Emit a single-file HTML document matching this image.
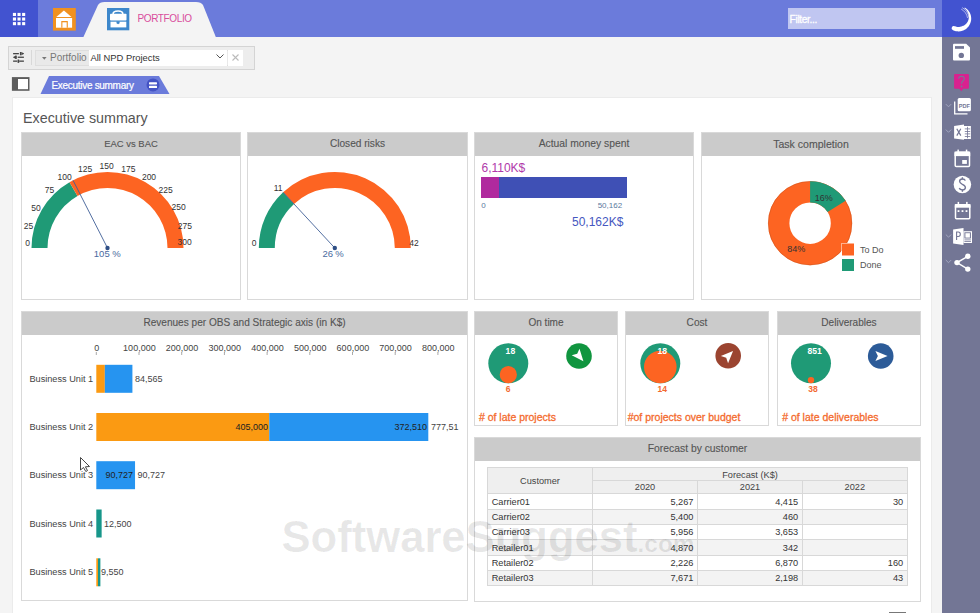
<!DOCTYPE html>
<html><head><meta charset="utf-8">
<style>
*{margin:0;padding:0;box-sizing:border-box}
html,body{width:980px;height:613px;overflow:hidden;background:#f4f4f4;font-family:"Liberation Sans",sans-serif;color:#444}
.a{position:absolute}
#top{left:0;top:0;width:942px;height:37px;background:#6b7bdb}
#apps{left:0;top:0;width:37.5px;height:37px;background:#4253d0}
#side{left:942px;top:0;width:38px;height:613px;background:#737695}
#sidetop{left:942px;top:0;width:38px;height:37px;background:#4253d0}
.card{position:absolute;background:#fff;border:1px solid #d9d9d9}
.hd{position:absolute;left:0;top:0;right:0;height:23px;background:#cbcbcb;color:#555;-webkit-text-stroke:0.12px #555;font-size:10.2px;text-align:center;line-height:22.5px}
.t{position:absolute;white-space:nowrap;line-height:1}
.lbl{position:absolute;font-size:8.5px;color:#333;transform:translate(-50%,-50%);white-space:nowrap}
</style></head><body>
<div id="top" class="a"></div>
<div id="apps" class="a">
  <svg class="a" style="left:0;top:0" width="37" height="37" viewBox="0 0 37 37" fill="#fff"><rect x="12.9" y="12.9" width="3.1" height="3.1"/><rect x="17.5" y="12.9" width="3.1" height="3.1"/><rect x="22.1" y="12.9" width="3.1" height="3.1"/><rect x="12.9" y="17.5" width="3.1" height="3.1"/><rect x="17.5" y="17.5" width="3.1" height="3.1"/><rect x="22.1" y="17.5" width="3.1" height="3.1"/><rect x="12.9" y="22.1" width="3.1" height="3.1"/><rect x="17.5" y="22.1" width="3.1" height="3.1"/><rect x="22.1" y="22.1" width="3.1" height="3.1"/></svg>
</div>
<!-- home icon -->
<svg class="a" style="left:53px;top:8px" width="23" height="23" viewBox="53 8 23 23">
  <rect x="53" y="8" width="22.8" height="22.6" fill="#f1911f"/>
  <path d="M56.3 16.9 L63.9 10.4 L71.5 16.9 Z" fill="#fff"/>
  <rect x="56" y="18" width="16.1" height="9.7" fill="#fff"/>
  <rect x="61.3" y="21" width="6.5" height="6.7" fill="#f1911f"/>
  <rect x="62.4" y="22.3" width="4.3" height="5.4" fill="#fff"/>
</svg>
<!-- active tab -->
<svg class="a" style="left:80px;top:0" width="140" height="38" viewBox="0 0 140 38">
  <path d="M3.2 37.5 L18 5 Q19.8 2 24.5 2 L116 2 Q121 2 123 5 L136 37.5 Z" fill="#f4f4f4"/>
</svg>
<svg class="a" style="left:106.8px;top:8px" width="23" height="23" viewBox="106.8 8 23 23">
  <rect x="106.8" y="8" width="22.3" height="22.3" fill="#3d87cb"/>
  <path d="M112.9 13.9 Q112.9 11 117.9 11 Q122.6 11 122.6 13.9" fill="none" stroke="#fff" stroke-width="1.6"/>
  <rect x="109.8" y="13.7" width="16.5" height="6.9" rx="0.8" fill="#fff"/>
  <rect x="110.3" y="21.7" width="15.8" height="5.7" fill="#fff"/>
  <path d="M116.3 21.3 H119.4 V23.3 L117.85 24.3 L116.3 23.3 Z" fill="#3d87cb"/>
</svg>
<div class="a" style="left:137.5px;top:12.6px;font-size:10px;letter-spacing:-0.38px;color:#d94d9c;line-height:12px">PORTFOLIO</div>
<!-- filter -->
<div class="a" style="left:788px;top:8px;width:147px;height:21px;background:#c0c6f1;color:#fff;font-size:10.2px;letter-spacing:-0.35px;-webkit-text-stroke:0.3px #fff;line-height:24.4px;padding-left:1.6px">Filter...</div>
<div id="side" class="a"></div>
<div id="sidetop" class="a"></div>
<!-- moon logo -->
<svg class="a" style="left:942px;top:0" width="38" height="37" viewBox="942 0 38 37">
  <path d="M964.80 7.51 L965.50 7.95 L966.16 8.42 L966.80 8.94 L967.40 9.50 L967.96 10.09 L968.49 10.72 L968.97 11.38 L969.41 12.07 L969.80 12.79 L970.15 13.53 L970.45 14.29 L970.70 15.07 L970.90 15.87 L971.05 16.67 L971.15 17.48 L971.20 18.30 L971.19 19.12 L971.13 19.94 L971.02 20.75 L970.85 21.55 L970.64 22.34 L970.38 23.12 L970.06 23.87 L969.70 24.61 L969.29 25.32 L968.84 26.00 L968.35 26.66 L967.81 27.27 L967.24 27.86 L966.63 28.41 L965.98 28.91 L965.31 29.38 L964.61 29.80 L963.88 30.17 L963.13 30.50 L962.36 30.77 L961.57 31.00 L960.77 31.18 L959.96 31.30 L959.14 31.38 L958.33 31.40 L957.51 31.37 L956.69 31.29 L955.88 31.15 L955.09 30.96 L954.30 30.73 L953.54 30.44 L952.79 30.10 A2.20 2.20 0 0 1 954.72 26.15 L954.72 26.15 L955.21 26.37 L955.71 26.56 L956.23 26.71 L956.75 26.84 L957.28 26.92 L957.81 26.98 L958.35 27.00 L958.89 26.99 L959.42 26.94 L959.95 26.85 L960.48 26.74 L961.00 26.59 L961.50 26.41 L962.01 26.22 L962.54 26.06 L963.06 25.87 L963.58 25.64 L964.09 25.38 L964.58 25.08 L965.06 24.74 L965.52 24.37 L965.96 23.96 L966.38 23.52 L966.77 23.05 L967.13 22.55 L967.47 22.02 L967.77 21.46 L968.03 20.88 L968.26 20.28 L968.45 19.66 L968.61 19.02 L968.72 18.36 L968.79 17.69 L968.81 17.01 L968.79 16.33 L968.72 15.64 L968.61 14.95 L968.45 14.26 L968.25 13.58 L968.00 12.91 L967.70 12.25 L967.36 11.60 L966.97 10.97 L966.54 10.36 L966.07 9.78 L965.55 9.23 L964.99 8.70 L964.40 8.21 Z" fill="#fff"/>
  <path d="M962.2 7.6 Q967.8 10.8 969 17.5" fill="none" stroke="#fff" stroke-width="0.55"/>
  <path d="M961.2 9.1 Q966.4 12 967.6 18" fill="none" stroke="#fff" stroke-width="0.55"/>
</svg>
<!-- toolbar -->
<div class="a" style="left:8px;top:46px;width:247px;height:24px;background:#ededed;border:1px solid #d4d4d4"></div>
<svg class="a" style="left:0;top:0" width="40" height="70" viewBox="0 0 40 70" fill="#454545">
  <rect x="13.1" y="53" width="5.8" height="1.3"/><rect x="19.9" y="52" width="1.7" height="3.3"/><path d="M21.6 52.3 L23.9 53.3 V54 L21.6 55Z"/>
  <rect x="15" y="55.6" width="1.8" height="3.3"/><path d="M13.1 56.9 L15 56 V58.5 L13.1 57.6Z"/><rect x="17.7" y="56.6" width="6.2" height="1.3"/>
  <rect x="13.1" y="60.5" width="4.2" height="1.3"/><rect x="17.6" y="59.5" width="1.6" height="3.4"/><rect x="19.2" y="60.5" width="4.7" height="1.3"/>
</svg>
<div class="a" style="left:31px;top:50px;width:1px;height:15px;background:#d8d8d8"></div>
<div class="a" style="left:34.5px;top:49.5px;width:208.5px;height:16.5px;background:#e9e9e9;border:1px solid #dedede"></div>
<svg class="a" style="left:41.5px;top:57px" width="5" height="3" viewBox="0 0 5 3"><path d="M0 0 H4.6 L2.3 2.8Z" fill="#777"/></svg>
<div class="a" style="left:50px;top:52px;font-size:10px;color:#777;line-height:12px">Portfolio</div>
<div class="a" style="left:89px;top:50px;width:138px;height:16px;background:#fff"></div>
<div class="a" style="left:90.5px;top:52px;font-size:9.4px;color:#333;line-height:12px">All NPD Projects</div>
<svg class="a" style="left:216px;top:54px" width="8" height="5" viewBox="0 0 8 5"><path d="M0.5 0.5 L4 4 L7.5 0.5" fill="none" stroke="#555" stroke-width="1"/></svg>
<div class="a" style="left:228px;top:50px;width:15px;height:16px;background:#fff"></div>
<svg class="a" style="left:232px;top:54px" width="7" height="7" viewBox="0 0 7 7"><path d="M0.5 0.5 L6.5 6.5 M6.5 0.5 L0.5 6.5" stroke="#bbb" stroke-width="1.1"/></svg>

<!-- panel toggle -->
<svg class="a" style="left:11px;top:76px" width="20" height="16" viewBox="11 76 20 16">
  <rect x="11.9" y="77.1" width="17.6" height="13.7" fill="#5c5c5c"/>
  <rect x="18" y="79" width="10" height="10.2" fill="#fff"/>
</svg>
<!-- exec summary tab -->
<svg class="a" style="left:40px;top:76px" width="131" height="18" viewBox="0 0 131 18">
  <path d="M0.5 18 L9 0 H119 L129.5 18 Z" fill="#6b7bdb"/>
  <circle cx="113" cy="8.9" r="6.5" fill="#4453c4"/>
  <rect x="109" y="6.2" width="8" height="2.2" rx="0.6" fill="#fff"/>
  <rect x="109" y="9.8" width="8" height="2.2" rx="0.6" fill="#fff"/>
</svg>
<div class="a" style="left:51.5px;top:79.5px;font-size:10px;letter-spacing:-0.3px;-webkit-text-stroke:0.2px #fff;color:#fff;line-height:12px">Executive summary</div>

<!-- main panel -->
<div class="a" style="left:12px;top:97px;width:920px;height:520px;background:#fff;border:1px solid #ebebeb"></div>
<div class="a" style="left:23px;top:110.2px;font-size:14.3px;color:#555;line-height:17px">Executive summary</div>

<!-- row 1 cards -->
<div class="card" style="left:21px;top:132px;width:220px;height:168px"><div class="hd" style="font-size:9.45px">EAC vs BAC</div></div>
<div class="card" style="left:247px;top:132px;width:221px;height:168px"><div class="hd" style="font-size:10.15px">Closed risks</div></div>
<div class="card" style="left:474px;top:132px;width:220px;height:168px"><div class="hd" style="font-size:10.34px">Actual money spent</div></div>
<div class="card" style="left:701px;top:132px;width:220px;height:168px"><div class="hd" style="font-size:10.54px">Task completion</div></div>

<!-- row 2 -->
<div class="card" style="left:21px;top:311px;width:447px;height:290px"><div class="hd" style="font-size:10.09px">Revenues per OBS and Strategic axis (in K$)</div></div>
<div class="card" style="left:474px;top:311px;width:144px;height:115px"><div class="hd" style="font-size:10.05px">On time</div></div>
<div class="card" style="left:625px;top:311px;width:144px;height:115px"><div class="hd" style="font-size:10.1px">Cost</div></div>
<div class="card" style="left:777px;top:311px;width:144px;height:115px"><div class="hd" style="font-size:10.05px">Deliverables</div></div>
<div class="card" style="left:474px;top:437px;width:447px;height:165px"><div class="hd" style="font-size:10.35px">Forecast by customer</div></div>

<svg class="a" style="left:0;top:0" width="980" height="613" viewBox="0 0 980 613">
<path d="M31.50 248.00 A76 76 0 0 1 69.50 182.18 L77.50 196.04 A60 60 0 0 0 47.50 248.00 Z" fill="#1f9a76"/>
<path d="M69.50 182.18 A76 76 0 0 1 183.50 248.00 L167.50 248.00 A60 60 0 0 0 77.50 196.04 Z" fill="#fd6422"/>
<line x1="107.5" y1="248" x2="73.00" y2="180.28" stroke="#3f5f96" stroke-width="0.9"/>
<circle cx="107.5" cy="248" r="2.2" fill="#2f4f86"/>
<path d="M258.80 248.00 A76 76 0 0 1 283.11 192.29 L293.99 204.02 A60 60 0 0 0 274.80 248.00 Z" fill="#1f9a76"/>
<path d="M283.11 192.29 A76 76 0 0 1 410.80 248.00 L394.80 248.00 A60 60 0 0 0 293.99 204.02 Z" fill="#fd6422"/>
<line x1="334.8" y1="248" x2="283.11" y2="192.29" stroke="#3f5f96" stroke-width="0.9"/>
<circle cx="334.8" cy="248" r="2.2" fill="#2f4f86"/>
<rect x="481" y="177" width="146" height="21" fill="#3f50b5"/>
<rect x="481" y="177" width="18" height="21" fill="#b02a9e"/>
<circle cx="810.1" cy="223.2" r="31.35" fill="none" stroke="#fd6422" stroke-width="21.3"/>
<circle cx="810.1" cy="223.2" r="41.7" fill="none" stroke="#c9531c" stroke-width="0.6" opacity="0.8"/>
<path d="M810.10 181.20 A42 42 0 0 1 845.56 200.70 L827.58 212.11 A20.7 20.7 0 0 0 810.10 202.50 Z" fill="#1f9a76"/>
<rect x="841.5" y="243" width="13" height="13" fill="#fff"/>
<rect x="842" y="243.5" width="12" height="12" fill="#fd6422"/>
<rect x="841.5" y="258.5" width="13" height="13" fill="#fff"/>
<rect x="842" y="259" width="12" height="12" fill="#1f9a76"/>
<rect x="95.80" y="352" width="1" height="3" fill="#aaa"/>
<rect x="138.50" y="352" width="1" height="3" fill="#aaa"/>
<rect x="181.20" y="352" width="1" height="3" fill="#aaa"/>
<rect x="223.90" y="352" width="1" height="3" fill="#aaa"/>
<rect x="266.60" y="352" width="1" height="3" fill="#aaa"/>
<rect x="309.30" y="352" width="1" height="3" fill="#aaa"/>
<rect x="352.00" y="352" width="1" height="3" fill="#aaa"/>
<rect x="394.70" y="352" width="1" height="3" fill="#aaa"/>
<rect x="437.40" y="352" width="1" height="3" fill="#aaa"/>
<rect x="96.30" y="364.8" width="8.54" height="28" fill="#fb9a12"/>
<rect x="104.84" y="364.8" width="27.57" height="28" fill="#2694f0"/>
<rect x="96.30" y="413.0" width="172.94" height="28" fill="#fb9a12"/>
<rect x="269.24" y="413.0" width="159.06" height="28" fill="#2694f0"/>
<rect x="96.30" y="461.2" width="38.74" height="28" fill="#2694f0"/>
<rect x="96.30" y="509.5" width="5.34" height="28" fill="#17968a"/>
<rect x="96.30" y="558.3" width="1.71" height="28" fill="#fb9a12"/>
<rect x="98.01" y="558.3" width="2.37" height="28" fill="#17968a"/>
<circle cx="508.3" cy="363.3" r="20" fill="#1f9a76"/>
<circle cx="508.3" cy="374.7" r="8.6" fill="#fd6422"/>
<circle cx="660.3" cy="363.3" r="20" fill="#1f9a76"/>
<circle cx="660.3" cy="367.0" r="16.3" fill="#fd6422"/>
<circle cx="811" cy="363.3" r="20" fill="#1f9a76"/>
<circle cx="811" cy="380.1" r="3.2" fill="#fd6422"/>
<circle cx="579" cy="356" r="12.8" fill="#10953f"/>
<g transform="translate(579 356) rotate(140) scale(0.88)"><path d="M0 -7.8 L5.8 6 L0 3.2 L-5.8 6 Z" fill="#fff"/></g>
<circle cx="728.2" cy="355.8" r="12.8" fill="#9b4430"/>
<g transform="translate(728.2 355.8) rotate(45) scale(0.88)"><path d="M0 -7.8 L5.8 6 L0 3.2 L-5.8 6 Z" fill="#fff"/></g>
<circle cx="880.7" cy="356" r="12.8" fill="#2c5b98"/>
<g transform="translate(880.7 356) rotate(90) scale(0.88)"><path d="M0 -7.8 L5.8 6 L0 3.2 L-5.8 6 Z" fill="#fff"/></g>
</svg>
<div class="lbl" style="left:27.6px;top:242.5px;font-size:8.5px;color:#333;">0</div>
<div class="lbl" style="left:28.5px;top:226px;font-size:8.5px;color:#333;">25</div>
<div class="lbl" style="left:36px;top:207.5px;font-size:8.5px;color:#333;">50</div>
<div class="lbl" style="left:49.4px;top:190.4px;font-size:8.5px;color:#333;">75</div>
<div class="lbl" style="left:64.6px;top:177.2px;font-size:8.5px;color:#333;">100</div>
<div class="lbl" style="left:85.2px;top:168.8px;font-size:8.5px;color:#333;">125</div>
<div class="lbl" style="left:106.6px;top:166.3px;font-size:8.5px;color:#333;">150</div>
<div class="lbl" style="left:128.4px;top:168.8px;font-size:8.5px;color:#333;">175</div>
<div class="lbl" style="left:149px;top:177px;font-size:8.5px;color:#333;">200</div>
<div class="lbl" style="left:165.6px;top:190px;font-size:8.5px;color:#333;">225</div>
<div class="lbl" style="left:178.7px;top:207px;font-size:8.5px;color:#333;">250</div>
<div class="lbl" style="left:184.9px;top:226px;font-size:8.5px;color:#333;">275</div>
<div class="lbl" style="left:184.6px;top:242px;font-size:8.5px;color:#333;">300</div>
<div class="lbl" style="left:107.3px;top:252.8px;font-size:9.5px;color:#4a6aa0;">105 %</div>
<div class="lbl" style="left:254.1px;top:242.5px;font-size:8.5px;color:#333;">0</div>
<div class="lbl" style="left:278.2px;top:187.6px;font-size:8.5px;color:#333;">11</div>
<div class="lbl" style="left:413.9px;top:242.5px;font-size:8.5px;color:#333;">42</div>
<div class="lbl" style="left:333.1px;top:252.8px;font-size:9.5px;color:#4a6aa0;word-spacing:-0.5px">26 %</div>
<div class="lbl" style="left:503.4px;top:168px;font-size:12px;color:#b03aaa;">6,110K$</div>
<div class="lbl" style="left:483.5px;top:204.8px;font-size:8px;color:#5b7a9e;">0</div>
<div class="lbl" style="left:609.9px;top:204.8px;font-size:8px;color:#5b7a9e;">50,162</div>
<div class="lbl" style="left:597.7px;top:221.5px;font-size:12px;color:#4657c0;">50,162K$</div>
<div class="lbl" style="left:823.8px;top:198.2px;font-size:9px;color:#333;">16%</div>
<div class="lbl" style="left:796.3px;top:248.7px;font-size:9px;color:#333;">84%</div>
<div class="t" style="left:860px;top:245.8px;font-size:9px;color:#555;">To Do</div>
<div class="t" style="left:860px;top:261.3px;font-size:9px;color:#555;">Done</div>
<div class="lbl" style="left:96.7px;top:348.3px;font-size:9px;color:#444;">0</div>
<div class="lbl" style="left:139.4px;top:348.3px;font-size:9px;color:#444;">100,000</div>
<div class="lbl" style="left:182.1px;top:348.3px;font-size:9px;color:#444;">200,000</div>
<div class="lbl" style="left:224.80000000000004px;top:348.3px;font-size:9px;color:#444;">300,000</div>
<div class="lbl" style="left:267.5px;top:348.3px;font-size:9px;color:#444;">400,000</div>
<div class="lbl" style="left:310.2px;top:348.3px;font-size:9px;color:#444;">500,000</div>
<div class="lbl" style="left:352.90000000000003px;top:348.3px;font-size:9px;color:#444;">600,000</div>
<div class="lbl" style="left:395.6px;top:348.3px;font-size:9px;color:#444;">700,000</div>
<div class="lbl" style="left:438.3px;top:348.3px;font-size:9px;color:#444;">800,000</div>
<div class="t" style="left:29.4px;top:374.8px;font-size:9.2px;color:#444">Business Unit 1</div>
<div class="t" style="left:29.4px;top:423.0px;font-size:9.2px;color:#444">Business Unit 2</div>
<div class="t" style="left:29.4px;top:471.2px;font-size:9.2px;color:#444">Business Unit 3</div>
<div class="t" style="left:29.4px;top:519.5px;font-size:9.2px;color:#444">Business Unit 4</div>
<div class="t" style="left:29.4px;top:568.3px;font-size:9.2px;color:#444">Business Unit 5</div>
<div class="t" style="left:135px;top:375px;font-size:9px;color:#444;">84,565</div>
<div class="t" style="right:712px;top:423px;font-size:9px;color:#222">405,000</div>
<div class="t" style="right:553px;top:423px;font-size:9px;color:#222">372,510</div>
<div class="t" style="left:431px;top:423px;font-size:9px;color:#444;">777,51</div>
<div class="t" style="right:847px;top:471.2px;font-size:9px;color:#222">90,727</div>
<div class="t" style="left:137.5px;top:471.2px;font-size:9px;color:#444;">90,727</div>
<div class="t" style="left:104px;top:519.5px;font-size:9px;color:#444;">12,500</div>
<div class="t" style="left:101px;top:568.3px;font-size:9px;color:#444;">9,550</div>
<div class="lbl" style="left:510.4px;top:350.9px;font-size:8.6px;color:#fff;font-weight:bold">18</div>
<div class="lbl" style="left:508.2px;top:389.2px;font-size:8.5px;color:#f26a30;font-weight:bold">6</div>
<div class="lbl" style="left:662.2px;top:350.9px;font-size:8.6px;color:#fff;font-weight:bold">18</div>
<div class="lbl" style="left:662.3px;top:389.2px;font-size:8.5px;color:#f26a30;font-weight:bold">14</div>
<div class="lbl" style="left:814.6px;top:350.9px;font-size:8.6px;color:#fff;font-weight:bold">851</div>
<div class="lbl" style="left:813px;top:389.2px;font-size:8.5px;color:#f26a30;font-weight:bold">38</div>
<div class="t" style="left:478.9px;top:411.7px;font-size:10.5px;color:#f46b2e;-webkit-text-stroke:0.3px #f46b2e"># of late projects</div>
<div class="t" style="left:627.7px;top:411.7px;font-size:10.5px;color:#f46b2e;-webkit-text-stroke:0.3px #f46b2e">#of projects over budget</div>
<div class="t" style="left:782.2px;top:411.7px;font-size:10.5px;color:#f46b2e;-webkit-text-stroke:0.3px #f46b2e"># of late deliverables</div>
<svg class="a" style="left:0;top:0" width="980" height="613" viewBox="0 0 980 613" shape-rendering="crispEdges">
<rect x="487.4" y="467.4" width="419.80000000000007" height="25.80000000000001" fill="#efefef"/>
<rect x="487.4" y="509.0" width="419.80000000000007" height="15.399999999999977" fill="#f3f3f3"/>
<rect x="487.4" y="539.7" width="419.80000000000007" height="15.699999999999932" fill="#f3f3f3"/>
<rect x="487.4" y="570.4" width="419.80000000000007" height="15.100000000000023" fill="#f3f3f3"/>
<rect x="487.4" y="466.9" width="419.80000000000007" height="1" fill="#d8d8d8"/>
<rect x="592.5" y="479.7" width="314.70000000000005" height="1" fill="#d8d8d8"/>
<rect x="487.4" y="492.7" width="419.80000000000007" height="1" fill="#d8d8d8"/>
<rect x="487.4" y="508.5" width="419.80000000000007" height="1" fill="#d8d8d8"/>
<rect x="487.4" y="523.9" width="419.80000000000007" height="1" fill="#d8d8d8"/>
<rect x="487.4" y="539.2" width="419.80000000000007" height="1" fill="#d8d8d8"/>
<rect x="487.4" y="554.9" width="419.80000000000007" height="1" fill="#d8d8d8"/>
<rect x="487.4" y="569.9" width="419.80000000000007" height="1" fill="#d8d8d8"/>
<rect x="487.4" y="585.0" width="419.80000000000007" height="1" fill="#d8d8d8"/>
<rect x="486.9" y="467.4" width="1" height="118.10000000000002" fill="#d8d8d8"/>
<rect x="906.7" y="467.4" width="1" height="118.10000000000002" fill="#d8d8d8"/>
<rect x="592.0" y="467.4" width="1" height="118.10000000000002" fill="#d8d8d8"/>
<rect x="697.0" y="480.2" width="1" height="105.30000000000001" fill="#d8d8d8"/>
<rect x="801.8" y="480.2" width="1" height="105.30000000000001" fill="#d8d8d8"/>
</svg>
<div class="lbl" style="left:540px;top:480.9px;font-size:9.2px;color:#444">Customer</div>
<div class="lbl" style="left:750px;top:474.6px;font-size:9.2px;color:#444">Forecast (K$)</div>
<div class="lbl" style="left:645px;top:487.4px;font-size:9.2px;color:#444">2020</div>
<div class="lbl" style="left:750px;top:487.4px;font-size:9.2px;color:#444">2021</div>
<div class="lbl" style="left:854.8px;top:487.4px;font-size:9.2px;color:#444">2022</div>
<div class="t" style="left:491.7px;top:497.50px;font-size:9.2px;color:#333">Carrier01</div>
<div class="t" style="right:286.60px;top:497.50px;font-size:9.2px;color:#333">5,267</div>
<div class="t" style="right:181.80px;top:497.50px;font-size:9.2px;color:#333">4,415</div>
<div class="t" style="right:76.90px;top:497.50px;font-size:9.2px;color:#333">30</div>
<div class="t" style="left:491.7px;top:513.10px;font-size:9.2px;color:#333">Carrier02</div>
<div class="t" style="right:286.60px;top:513.10px;font-size:9.2px;color:#333">5,400</div>
<div class="t" style="right:181.80px;top:513.10px;font-size:9.2px;color:#333">460</div>
<div class="t" style="left:491.7px;top:528.45px;font-size:9.2px;color:#333">Carrier03</div>
<div class="t" style="right:286.60px;top:528.45px;font-size:9.2px;color:#333">5,956</div>
<div class="t" style="right:181.80px;top:528.45px;font-size:9.2px;color:#333">3,653</div>
<div class="t" style="left:491.7px;top:543.95px;font-size:9.2px;color:#333">Retailer01</div>
<div class="t" style="right:286.60px;top:543.95px;font-size:9.2px;color:#333">4,870</div>
<div class="t" style="right:181.80px;top:543.95px;font-size:9.2px;color:#333">342</div>
<div class="t" style="left:491.7px;top:559.30px;font-size:9.2px;color:#333">Retailer02</div>
<div class="t" style="right:286.60px;top:559.30px;font-size:9.2px;color:#333">2,226</div>
<div class="t" style="right:181.80px;top:559.30px;font-size:9.2px;color:#333">6,870</div>
<div class="t" style="right:76.90px;top:559.30px;font-size:9.2px;color:#333">160</div>
<div class="t" style="left:491.7px;top:574.35px;font-size:9.2px;color:#333">Retailer03</div>
<div class="t" style="right:286.60px;top:574.35px;font-size:9.2px;color:#333">7,671</div>
<div class="t" style="right:181.80px;top:574.35px;font-size:9.2px;color:#333">2,198</div>
<div class="t" style="right:76.90px;top:574.35px;font-size:9.2px;color:#333">43</div>
<svg class="a" style="left:942px;top:0" width="38" height="613" viewBox="942 0 38 613">
<path d="M954 43.8 H966.2 L970 47.6 V59.6 Q970 60.6 969 60.6 H954 Q953 60.6 953 59.6 V44.8 Q953 43.8 954 43.8Z" fill="#fff"/>
<rect x="955" y="46.1" width="9" height="2.7" fill="#737695"/>
<circle cx="961.3" cy="55.4" r="2.7" fill="#737695"/>
<path d="M955 73.9 H968 Q968.9 73.9 968.9 74.8 V88 Q968.9 88.8 968 88.8 H963.3 L961.3 91.3 L959.3 88.8 H955 Q954.1 88.8 954.1 88 V74.8 Q954.1 73.9 955 73.9Z" fill="#d9218f"/>
<path d="M958.6 78.8 Q958.8 76.3 961.5 76.3 Q964.3 76.4 964.3 78.6 Q964.3 80.2 962.6 81.2 Q961.6 81.8 961.6 83.8" fill="none" stroke="#767899" stroke-width="1.1"/>
<circle cx="961.6" cy="86.4" r="0.85" fill="#767899"/>
<path d="M945.8 104.1 L948.5 106.8 L951.2 104.1" fill="none" stroke="#a5a8c2" stroke-width="0.9"/>
<path d="M945.8 129.6 L948.5 132.29999999999998 L951.2 129.6" fill="none" stroke="#a5a8c2" stroke-width="0.9"/>
<path d="M945.8 234.5 L948.5 237.2 L951.2 234.5" fill="none" stroke="#a5a8c2" stroke-width="0.9"/>
<path d="M945.8 260 L948.5 262.7 L951.2 260" fill="none" stroke="#a5a8c2" stroke-width="0.9"/>
<path d="M954.7 101.4 V113.8 H967.5" fill="none" stroke="#fff" stroke-width="1.3"/>
<rect x="957.7" y="98.1" width="13.2" height="13.2" rx="1.5" fill="#fff"/>
<text x="964.3" y="107.5" font-family="Liberation Sans" font-weight="bold" font-size="5.6" fill="#737695" text-anchor="middle">PDF</text>
<path d="M954.1 126 L964 124.4 V139.7 L954.1 138.4 Z" fill="#fff"/>
<rect x="964" y="126" width="6.9" height="13" fill="#fff"/>
<rect x="964.8" y="128.5" width="5.4" height="0.8" fill="#737695"/>
<rect x="964.8" y="131" width="5.4" height="0.8" fill="#737695"/>
<rect x="964.8" y="133.5" width="5.4" height="0.8" fill="#737695"/>
<rect x="964.8" y="136" width="5.4" height="0.8" fill="#737695"/>
<rect x="967.2" y="126.8" width="0.8" height="11.5" fill="#737695"/>
<path d="M956.8 128.8 L960.8 135.6 M960.8 128.8 L956.8 135.6" stroke="#737695" stroke-width="1.2"/>
<rect x="955.2" y="152.3" width="14.3" height="14.1" rx="1" fill="none" stroke="#fff" stroke-width="1.5"/>
<rect x="954.5" y="151.6" width="15.7" height="4.5" fill="#fff"/>
<rect x="957.4" y="149.6" width="1.5" height="3" fill="#fff"/><rect x="965.8" y="149.6" width="1.5" height="3" fill="#fff"/>
<rect x="962.2" y="160" width="4.7" height="3.9" fill="#fff"/>
<circle cx="962.4" cy="184.5" r="8.75" fill="#fff"/>
<path d="M965.3 180.6 Q964.8 179 962.4 179 Q959.6 179 959.6 181.2 Q959.6 183 962.4 184.3 Q965.4 185.5 965.4 187.5 Q965.4 189.9 962.4 189.9 Q959.8 189.9 959.3 188" fill="none" stroke="#737695" stroke-width="1.4"/>
<rect x="961.7" y="177.2" width="1.4" height="2.2" fill="#737695"/><rect x="961.7" y="189.6" width="1.4" height="2.2" fill="#737695"/>
<rect x="955.5" y="204.8" width="14.3" height="14" rx="1" fill="none" stroke="#fff" stroke-width="1.5"/>
<rect x="954.8" y="204.1" width="15.7" height="3.6" fill="#fff"/>
<rect x="957.6" y="201.9" width="1.5" height="3" fill="#fff"/><rect x="966.1" y="201.9" width="1.5" height="3" fill="#fff"/>
<rect x="957.6" y="210.2" width="1.8" height="1.8" fill="#fff"/>
<rect x="961.6" y="210.2" width="1.8" height="1.8" fill="#fff"/>
<rect x="965.6" y="210.2" width="1.8" height="1.8" fill="#fff"/>
<path d="M953.1 229.5 L963.5 228 V245 L953.1 243.5 Z" fill="#fff"/>
<rect x="963.5" y="231.2" width="8.5" height="11.8" fill="#fff"/>
<rect x="964.4" y="232.3" width="6.5" height="6.2" fill="#737695"/>
<rect x="965.4" y="233.2" width="4.5" height="4.4" fill="#fff"/>
<rect x="964.4" y="239.5" width="6.5" height="0.8" fill="#737695"/><rect x="964.4" y="241.2" width="6.5" height="0.8" fill="#737695"/>
<path d="M956.6 240 V232 H958.3 Q960.3 232 960.3 234.3 Q960.3 236.5 958.3 236.5 H956.6" fill="none" stroke="#737695" stroke-width="1.1"/>
<path d="M967.8 256.3 L957 262.6 L967.8 269.1" fill="none" stroke="#fff" stroke-width="1.5"/>
<circle cx="967.8" cy="256.3" r="2.7" fill="#fff"/>
<circle cx="957" cy="262.6" r="2.7" fill="#fff"/>
<circle cx="967.8" cy="269.1" r="2.7" fill="#fff"/>
</svg>
<div class="t" style="left:281.5px;top:515.8px;font-size:43.6px;font-weight:bold;color:rgba(0,0,0,0.09)">SoftwareSuggest<span style="font-size:24.4px">.com</span></div>
<svg class="a" style="left:79px;top:456px" width="14" height="18" viewBox="0 0 14 18"><path d="M1.5 1.5 L1.5 14 L4.5 11.5 L6.8 15.5 L8.5 14.6 L6.4 10.8 L10.5 10.5 Z" fill="#fff" stroke="#333" stroke-width="0.9" stroke-linejoin="round"/></svg>
<div class="a" style="left:889px;top:612px;width:17px;height:1px;background:#777"></div>
</body></html>
